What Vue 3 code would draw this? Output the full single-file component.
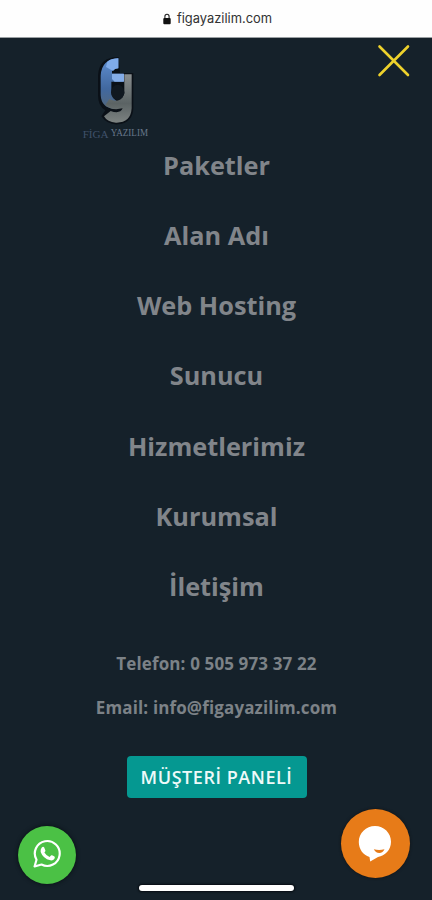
<script setup>
const links = ['Paketler', 'Alan Adı', 'Web Hosting', 'Sunucu', 'Hizmetlerimiz', 'Kurumsal', 'İletişim']
</script>

<template>
  <div class="screen">
    <header class="address">
      <svg class="lock" viewBox="0 0 8 12" width="8" height="12">
        <path d="M1.900 5.500V3.600a2.100 2.300 0 0 1 4.200 0v1.900" fill="none" stroke="#222" stroke-width="1.100" />
        <rect x="0.300" y="5" width="7.400" height="6.200" rx="1" fill="#111" />
      </svg>
      <span>figayazilim.com</span>
    </header>

    <div class="top">
      <svg class="logo" viewBox="30 0 216 285" width="72" height="95">
        <defs>
          <linearGradient id="blue" x1="0" y1="0" x2="0" y2="1">
            <stop offset="0" stop-color="#5f8fd2" />
            <stop offset="0.600" stop-color="#41689f" />
            <stop offset="1" stop-color="#52677c" />
          </linearGradient>
          <linearGradient id="steel" x1="0" y1="0" x2="0" y2="1">
            <stop offset="0" stop-color="#8a8f90" />
            <stop offset="0.600" stop-color="#5b6364" />
            <stop offset="1" stop-color="#7d8382" />
          </linearGradient>
        </defs>
        <path d="M146 36Q86 36 84 92V150Q84 184 106 196L94 214Q112 240 144 238Q190 232 190 188V84H150Z" fill="#0a1017" />
        <path d="M145 40Q95 42 92 92V150Q94 188 132 192L150 172Q124 164 124 140V110H160V86H126V78Q128 70 145 70Z" fill="url(#blue)" />
        <path d="M112 50Q126 40 145 40V70Q134 70 129 78L108 66Z" fill="#7fabe9" />
        <path d="M126 86H162V110H134L126 102Z" fill="#84ade8" />
        <path d="M163 88H185V190Q182 234 138 233Q112 232 102 214L122 198Q150 208 158 190Q124 198 106 180L118 162Q148 178 163 146Z" fill="url(#steel)" />
        <ellipse cx="143" cy="142" rx="20" ry="23" fill="#101820" />
        <g class="wordmark">
          <text x="38" y="279" textLength="78" lengthAdjust="spacingAndGlyphs" fill="#40526a">FİGA</text>
          <text x="122" y="273" textLength="112" lengthAdjust="spacingAndGlyphs" fill="#68788a">YAZILIM</text>
        </g>
      </svg>
      <svg class="close" viewBox="0 0 34 34" width="34" height="34">
        <path d="M2.500 2.500L31 31M31 2.500L2.500 31" stroke="#eed22c" stroke-width="2.600" stroke-linecap="round" />
      </svg>
    </div>

    <nav class="menu">
      <a v-for="link in links" :key="link">{{ link }}</a>
    </nav>

    <div class="contact">
      <p class="phone">Telefon: 0 505 973 37 22</p>
      <p class="email">Email: info@figayazilim.com</p>
    </div>

    <button class="panel">MÜŞTERİ PANELİ</button>

    <div class="fab whatsapp">
      <svg viewBox="0 0 28 28" width="29" height="29">
        <path d="M1.500 26.500L3.400 20A12 12 0 1 1 8.200 24.600Z" fill="none" stroke="#fff" stroke-width="2.100" stroke-linejoin="round" />
        <path d="M8.300 8.500Q9.500 7 10.700 7.900L12 11Q12.300 11.600 11 13.100Q12.800 16.200 16 17.300L17.600 15.800Q18.200 15.400 20.700 17Q21.500 17.500 20.700 19Q19.500 21 16.800 20.600Q9.500 18.700 7.400 12.500Q7 10.300 8.300 8.500Z" fill="#fff" />
      </svg>
    </div>
    <div class="fab chat">
      <svg viewBox="0 0 34 37" width="34" height="37">
        <path d="M17 1C26 1 33 8 33 16.800C33 25 27 31 20 32L12.200 36.400L11.500 32C5 30 .800 24 .800 17C.800 8 8 1 17 1Z" fill="#fff" />
        <path d="M15.800 24.300Q21 25.500 26.500 24.300Q25 28 21.300 28Q17.500 28 15.800 24.300Z" fill="#e77b18" />
      </svg>
    </div>
    <div class="home"></div>
  </div>
</template>

<style>
body {
  margin: 0;
}
</style>

<style scoped>
.screen {
  position: relative;
  display: flex;
  flex-direction: column;
  align-items: center;
  width: 432px;
  height: 900px;
  overflow: hidden;
  background: #15212a;
  font-family: "Open Sans", sans-serif;
}
.address {
  box-sizing: border-box;
  display: flex;
  flex: none;
  align-items: center;
  justify-content: center;
  gap: 6px;
  width: 100%;
  height: 38px;
  padding-left: 3px;
  border-bottom: 1px solid #9ba0a3;
  background: #fefefe;
  color: #333;
  font: 12.900px/38px Inter, sans-serif;
}
.top {
  box-sizing: border-box;
  display: flex;
  flex: none;
  align-items: flex-start;
  justify-content: space-between;
  width: 100%;
  height: 91.600px;
  padding: 7px 21px 0 80px;
}
.logo {
  overflow: visible;
}
.wordmark {
  font: 34px "Liberation Serif", serif;
}
.close {
  margin-top: -1px;
}
.menu {
  box-sizing: border-box;
  display: flex;
  flex: none;
  flex-direction: column;
  align-items: center;
  width: 100%;
  padding-left: 1px;
}
.menu a {
  height: 70.300px;
  color: #81858a;
  font-size: 25.300px;
  font-weight: 700;
  line-height: 70.300px;
  white-space: nowrap;
}
.contact {
  display: flex;
  flex: none;
  flex-direction: column;
  align-items: center;
  margin-top: 20.300px;
  padding-left: 1px;
  color: #7c8287;
  font-size: 17px;
  font-weight: 700;
  letter-spacing: 0.130px;
  line-height: 44px;
}
.contact p {
  margin: 0;
}
.panel {
  flex: none;
  width: 180px;
  height: 42px;
  margin: 26px 0 0 1px;
  padding: 0;
  border: 0;
  border-radius: 4px;
  background: #059891;
  color: #eefaf9;
  font: 600 18px/42px "Open Sans", sans-serif;
  letter-spacing: 0.550px;
  white-space: nowrap;
}
.fab {
  position: absolute;
  display: flex;
  align-items: center;
  justify-content: center;
  border-radius: 50%;
}
.whatsapp {
  left: 18px;
  top: 826px;
  width: 58px;
  height: 58px;
  background: #4bc145;
  box-shadow: 0 0 4px #080e12;
}
.whatsapp svg {
  margin-top: -3px;
}
.chat {
  left: 341px;
  top: 809px;
  width: 69px;
  height: 69px;
  background: #e77b18;
  box-shadow: 0 0 3px #101214;
}
.chat svg {
  margin-right: 1px;
}
.home {
  position: absolute;
  left: 139px;
  top: 885px;
  width: 155px;
  height: 6px;
  border-radius: 3px;
  background: #fff;
  box-shadow: 0 0 2px 1px #070c12;
}
</style>
